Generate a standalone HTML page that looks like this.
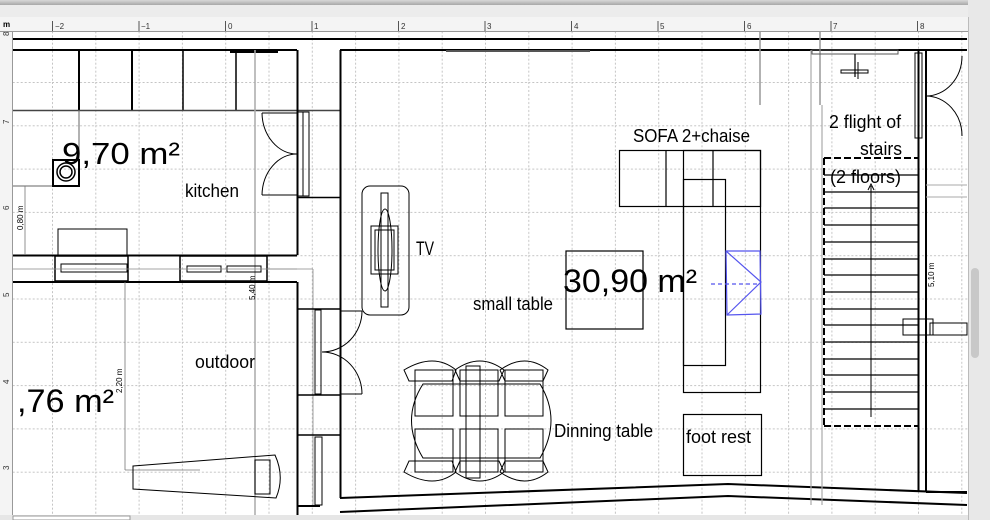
<!DOCTYPE html>
<html><head><meta charset="utf-8"><style>
html,body{margin:0;padding:0;width:990px;height:520px;overflow:hidden;background:#fff}
svg{display:block}
text{font-family:"Liberation Sans",sans-serif}
</style></head><body>
<svg width="990" height="520" viewBox="0 0 990 520" xmlns="http://www.w3.org/2000/svg">
<defs>
<linearGradient id="tb" x1="0" y1="0" x2="0" y2="1"><stop offset="0" stop-color="#d8d8d8"/><stop offset="1" stop-color="#a8a8a8"/></linearGradient>
<pattern id="grid" x="52" y="38.7" width="43.3" height="43.3" patternUnits="userSpaceOnUse">
<line x1="0.5" y1="0" x2="0.5" y2="43.3" stroke="#c4c4c4" stroke-width="1" stroke-dasharray="2 2"/>
<line x1="0" y1="0.5" x2="43.3" y2="0.5" stroke="#c4c4c4" stroke-width="1" stroke-dasharray="2 2"/>
</pattern>
</defs>
<rect x="0" y="0" width="990" height="520" fill="#fff"/>
<rect x="13" y="32" width="955" height="483" fill="url(#grid)"/>
<rect x="0" y="0" width="990" height="5" fill="url(#tb)"/>
<rect x="0" y="5" width="990" height="12" fill="#ececec"/>
<rect x="0" y="17" width="968" height="15" fill="#f4f4f4"/>
<line x1="0" y1="31.5" x2="968" y2="31.5" stroke="#999"/>
<rect x="0" y="32" width="13" height="483" fill="#f4f4f4"/>
<line x1="12.5" y1="32" x2="12.5" y2="515" stroke="#999"/>
<text x="3" y="27" font-size="8" font-weight="bold">m</text>
<g stroke="#555" stroke-width="1">
<line x1="52.5" y1="21" x2="52.5" y2="31"/><line x1="139" y1="21" x2="139" y2="31"/><line x1="225.5" y1="21" x2="225.5" y2="31"/><line x1="312" y1="21" x2="312" y2="31"/><line x1="398.5" y1="21" x2="398.5" y2="31"/><line x1="485" y1="21" x2="485" y2="31"/><line x1="571.5" y1="21" x2="571.5" y2="31"/><line x1="658" y1="21" x2="658" y2="31"/><line x1="744.5" y1="21" x2="744.5" y2="31"/><line x1="831" y1="21" x2="831" y2="31"/><line x1="917.5" y1="21" x2="917.5" y2="31"/>
</g>
<g font-size="8" fill="#333">
<text x="55" y="29">−2</text><text x="141" y="29">−1</text><text x="228" y="29">0</text><text x="314" y="29">1</text><text x="401" y="29">2</text><text x="487" y="29">3</text><text x="574" y="29">4</text><text x="660" y="29">5</text><text x="747" y="29">6</text><text x="833" y="29">7</text><text x="920" y="29">8</text>
</g>
<g fill="#333" font-size="8">
<text transform="translate(9,36) rotate(-90)">8</text><text transform="translate(9,124) rotate(-90)">7</text><text transform="translate(9,210) rotate(-90)">6</text><text transform="translate(9,297) rotate(-90)">5</text><text transform="translate(9,384) rotate(-90)">4</text><text transform="translate(9,470) rotate(-90)">3</text>
</g>
<rect x="968" y="0" width="22" height="520" fill="#e8e8e8"/>
<line x1="968.5" y1="17" x2="968.5" y2="520" stroke="#bbb"/>
<rect x="971" y="268" width="8" height="90" rx="4" fill="#c8c8c8"/>
<rect x="0" y="515" width="968" height="5" fill="#e6e6e6"/>
<rect x="13" y="516" width="117" height="4" fill="#fff" stroke="#999"/>

<g stroke="#000" fill="none">
<line x1="13" y1="39" x2="967" y2="39" stroke-width="2"/>
<line x1="13" y1="50" x2="297" y2="50" stroke-width="2"/>
<line x1="340" y1="50" x2="967" y2="50" stroke-width="2"/>
<line x1="446" y1="51" x2="590" y2="51" stroke-width="2" stroke="#555"/>
<line x1="79" y1="50" x2="79" y2="110" stroke-width="2"/>
<line x1="132" y1="50" x2="132" y2="110" stroke-width="2"/>
<line x1="183" y1="50" x2="183" y2="110" stroke-width="1.5"/>
<line x1="236" y1="50" x2="236" y2="110" stroke-width="1.5"/>
<line x1="13" y1="110.5" x2="340" y2="110.5" stroke-width="1.5" stroke="#444"/>
<line x1="230" y1="52" x2="278" y2="52" stroke-width="2"/>
<line x1="255" y1="50" x2="255" y2="515" stroke="#aaa" stroke-width="1.5"/>
<line x1="79" y1="110" x2="79" y2="186" stroke="#666"/>
<line x1="13" y1="186" x2="53" y2="186" stroke="#666"/>
<line x1="297.5" y1="50" x2="297.5" y2="255" stroke-width="2"/>
<line x1="297.5" y1="282" x2="297.5" y2="515" stroke-width="2"/>
<line x1="340.5" y1="50" x2="340.5" y2="498" stroke-width="2"/>
<line x1="297" y1="197.5" x2="340" y2="197.5" stroke-width="1.5"/>
<rect x="298" y="112" width="5" height="84" stroke-width="1"/>
<rect x="303" y="112" width="6" height="84" stroke-width="1"/>
<path d="M297 154 A35 42 0 0 1 262 113 M262 113 L297 113" stroke-width="1"/>
<path d="M297 154 A35 42 0 0 0 262 195 M262 195 L297 195" stroke-width="1"/>
<rect x="53" y="160" width="26" height="26" stroke-width="2"/>
<circle cx="66" cy="172" r="9" stroke-width="1.5"/><circle cx="66" cy="172" r="6" stroke-width="1.5"/>
<rect x="58" y="229" width="69" height="26" stroke-width="1"/>
<line x1="13" y1="255.5" x2="297" y2="255.5" stroke-width="2"/>
<line x1="13" y1="282" x2="297" y2="282" stroke-width="2"/>
<rect x="55" y="256" width="73" height="25" stroke-width="1.5"/>
<rect x="61" y="264" width="66" height="8" stroke-width="1"/>
<rect x="180" y="256" width="87" height="25" stroke-width="1.5"/>
<rect x="187" y="266" width="34" height="6" stroke-width="1"/><rect x="227" y="266" width="34" height="6" stroke-width="1"/>
<line x1="13" y1="269" x2="297" y2="269" stroke="#888" stroke-width="0.8"/>
<line x1="267" y1="269" x2="313" y2="269" stroke="#888" stroke-width="0.8"/>
<line x1="313" y1="269" x2="313" y2="505" stroke="#888" stroke-width="0.8"/>
<line x1="25" y1="186" x2="25" y2="255" stroke="#777" stroke-width="0.8"/>
<line x1="125" y1="282" x2="125" y2="470" stroke="#777" stroke-width="0.8"/>
<line x1="125" y1="470" x2="200" y2="470" stroke="#777" stroke-width="0.8"/>
<line x1="297" y1="309" x2="340" y2="309" stroke-width="1.5"/>
<line x1="297" y1="395" x2="340" y2="395" stroke-width="1.5"/>
<line x1="297" y1="435" x2="340" y2="435" stroke-width="1.5"/>
<rect x="315" y="310" width="6" height="84" stroke-width="1"/>
<rect x="315" y="437" width="7" height="68" stroke-width="1"/>
<line x1="297" y1="506" x2="320" y2="506" stroke-width="2"/>
<path d="M322 352 A40 41 0 0 0 362 311 M341 311 L362 311" stroke-width="1"/>
<path d="M322 352 A40 42 0 0 1 362 394 M341 394 L362 394" stroke-width="1"/>
<path d="M133 466 L275 455 Q285 477 276 498 L133 489 Z" stroke-width="1"/>
<rect x="255" y="460" width="15" height="34" stroke-width="1"/>
<polyline points="340,498 728,484 967,493" stroke-width="2"/>
<polyline points="340,512 728,496 967,505" stroke-width="2"/>
<rect x="362" y="186" width="47" height="129" rx="8" stroke-width="1"/>
<rect x="381" y="193" width="7" height="114" stroke-width="1"/>
<ellipse cx="385" cy="250" rx="7" ry="41" stroke-width="1"/>
<rect x="371" y="226" width="27" height="48" stroke-width="1"/>
<rect x="375" y="230" width="19" height="40" stroke-width="1"/>
<rect x="566" y="251" width="77" height="78" stroke-width="1.2"/>
<rect x="619.5" y="150.5" width="141" height="56" stroke-width="1.2"/>
<line x1="666" y1="150" x2="666" y2="207" stroke-width="1.2"/>
<line x1="713" y1="150" x2="713" y2="207" stroke-width="1.2"/>
<rect x="683.5" y="150.5" width="77" height="242" stroke-width="1.2"/>
<rect x="683.5" y="179.5" width="42" height="186" stroke-width="1.2"/>
<rect x="683.5" y="414.5" width="78" height="61" stroke-width="1.2"/>
<g stroke="#5555ee" stroke-width="1.2"><path d="M726 251 L760 251 L761 314 L727 315 Z"/><path d="M726 251 L761 282 L727 315"/><line x1="711" y1="284" x2="760" y2="284" stroke-dasharray="4 3"/></g>
<g stroke-width="1">
<path d="M423 384 Q400 420 423 458 L540 458 Q562 420 540 384 Z"/>
<path d="M404 370 Q434 352 456 370 L452 381 L409 381 Z"/>
<path d="M455 370 Q480 352 504 370 L499 381 L460 381 Z"/>
<path d="M500 370 Q525 352 548 370 L543 381 L505 381 Z"/>
<path d="M404 472 Q434 490 456 472 L452 461 L409 461 Z"/>
<path d="M455 472 Q480 490 504 472 L499 461 L460 461 Z"/>
<path d="M500 472 Q525 490 548 472 L543 461 L505 461 Z"/>
<rect x="415" y="370" width="38" height="46"/><rect x="415" y="429" width="38" height="43"/>
<rect x="460" y="370" width="38" height="46"/><rect x="460" y="429" width="38" height="43"/>
<rect x="505" y="370" width="38" height="46"/><rect x="505" y="429" width="38" height="43"/>
<rect x="466" y="366" width="14" height="112"/>
</g>
<line x1="760" y1="32" x2="760" y2="105" stroke="#999" stroke-width="1.5"/>
<line x1="820" y1="32" x2="820" y2="105" stroke="#999" stroke-width="1.5"/>
<line x1="811" y1="50" x2="811" y2="505" stroke="#aaa" stroke-width="1.2"/>
<line x1="822" y1="105" x2="822" y2="505" stroke="#aaa" stroke-width="1.2"/>
<rect x="812" y="50" width="86" height="4" stroke="#555" stroke-width="1"/>
<line x1="855" y1="54" x2="855" y2="77" stroke-width="1.2"/>
<rect x="841" y="70" width="27" height="3" stroke-width="1"/>
<line x1="858" y1="62" x2="858" y2="79" stroke-width="1"/>
<line x1="824" y1="158" x2="918" y2="158" stroke-width="2" stroke-dasharray="7 3"/>
<line x1="824" y1="426" x2="918" y2="426" stroke-width="2" stroke-dasharray="7 3"/>
<line x1="824" y1="158" x2="824" y2="426" stroke-width="2" stroke-dasharray="7 3"/>
<g stroke-width="1.2">
<line x1="824" y1="175" x2="918" y2="175"/><line x1="824" y1="192" x2="918" y2="192"/><line x1="824" y1="208" x2="918" y2="208"/><line x1="824" y1="225" x2="918" y2="225"/><line x1="824" y1="242" x2="918" y2="242"/><line x1="824" y1="259" x2="918" y2="259"/><line x1="824" y1="275" x2="918" y2="275"/><line x1="824" y1="292" x2="918" y2="292"/><line x1="824" y1="309" x2="918" y2="309"/><line x1="824" y1="325" x2="918" y2="325"/><line x1="824" y1="342" x2="918" y2="342"/><line x1="824" y1="359" x2="918" y2="359"/><line x1="824" y1="375" x2="918" y2="375"/><line x1="824" y1="392" x2="918" y2="392"/><line x1="824" y1="409" x2="918" y2="409"/>
</g>
<line x1="871" y1="186" x2="871" y2="417" stroke-width="1"/>
<path d="M868 190 L871 184 L874 190" stroke-width="1"/>
<line x1="918.5" y1="50" x2="918.5" y2="492" stroke-width="2"/>
<line x1="926" y1="50" x2="926" y2="492" stroke-width="2"/>
<rect x="915" y="53" width="7" height="85" stroke-width="1"/>
<path d="M926 96 A36 40 0 0 0 962 56" stroke-width="1"/>
<path d="M926 96 A36 40 0 0 1 962 136" stroke-width="1"/>
<line x1="926" y1="492" x2="967" y2="492" stroke-width="2"/>
<line x1="926" y1="197" x2="967" y2="197" stroke="#aaa"/>
<line x1="926" y1="185" x2="967" y2="185" stroke="#aaa"/>
<rect x="903" y="319" width="30" height="16" stroke-width="1"/>
<rect x="930" y="323" width="37" height="12" stroke-width="1"/>
</g>
<g fill="#000">
<text x="62" y="164" font-size="31" textLength="118" lengthAdjust="spacingAndGlyphs">9,70 m²</text>
<text x="185" y="197" font-size="18" textLength="54" lengthAdjust="spacingAndGlyphs">kitchen</text>
<text x="416" y="255" font-size="19" textLength="18" lengthAdjust="spacingAndGlyphs">TV</text>
<text x="473" y="310" font-size="18" textLength="80" lengthAdjust="spacingAndGlyphs">small table</text>
<text x="563" y="292" font-size="32" textLength="134" lengthAdjust="spacingAndGlyphs">30,90 m²</text>
<text x="633" y="142" font-size="18" textLength="117" lengthAdjust="spacingAndGlyphs">SOFA 2+chaise</text>
<text x="829" y="128" font-size="18" textLength="72" lengthAdjust="spacingAndGlyphs">2 flight of</text>
<text x="860" y="155" font-size="18" textLength="42" lengthAdjust="spacingAndGlyphs">stairs</text>
<text x="830" y="183" font-size="18" textLength="71" lengthAdjust="spacingAndGlyphs">(2 floors)</text>
<text x="195" y="368" font-size="18" textLength="60" lengthAdjust="spacingAndGlyphs">outdoor</text>
<text x="17" y="412" font-size="32" textLength="97" lengthAdjust="spacingAndGlyphs">,76 m²</text>
<text x="554" y="437" font-size="18" textLength="99" lengthAdjust="spacingAndGlyphs">Dinning table</text>
<text x="686" y="443" font-size="18" textLength="65" lengthAdjust="spacingAndGlyphs">foot rest</text>
<text transform="translate(23,230) rotate(-90)" font-size="8">0,80 m</text>
<text transform="translate(122,393) rotate(-90)" font-size="8">2,20 m</text>
<text transform="translate(255,300) rotate(-90)" font-size="8">5,40 m</text>
<text transform="translate(934,287) rotate(-90)" font-size="8">5,10 m</text>
</g>
</svg>
</body></html>
